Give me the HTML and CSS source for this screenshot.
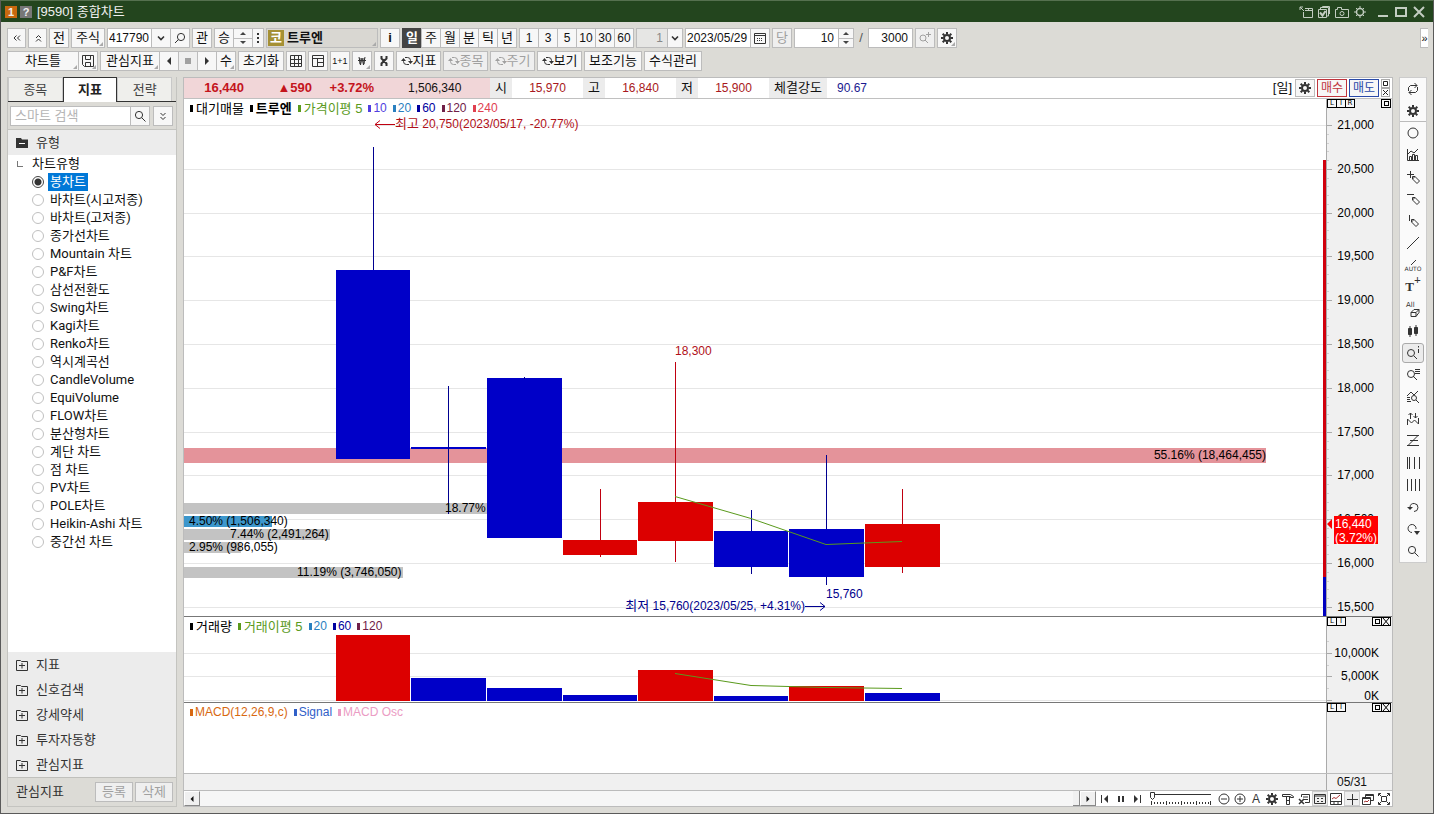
FILE: index.html
```html
<!DOCTYPE html>
<html lang="ko">
<head>
<meta charset="utf-8">
<title>[9590] 종합차트</title>
<link rel="stylesheet" href="styles.css">
</head>
<body>
<svg class="defs" aria-hidden="true">
  <symbol id="gear" viewBox="0 0 12 12"><g fill="none" stroke="currentColor"><circle cx="6" cy="6" r="3" stroke-width="2"/><path stroke-width="2" d="M6 0v2M6 10v2M0 6h2M10 6h2M1.7 1.7l1.5 1.5M8.8 8.8l1.5 1.5M10.3 1.7L8.8 3.2M3.2 8.8l-1.5 1.5"/></g></symbol>
  <symbol id="lens" viewBox="0 0 12 12"><g fill="none" stroke="currentColor"><circle cx="5" cy="5" r="3.6"/><path d="M7.7 7.7L11.5 11.5"/></g></symbol>
  <symbol id="lensl" viewBox="0 0 12 12"><g fill="none" stroke="currentColor"><circle cx="7" cy="5" r="3.6"/><path d="M4.4 7.6L1 11"/></g></symbol>
  <symbol id="down" viewBox="0 0 12 12"><path fill="none" stroke="currentColor" stroke-width="1.6" d="M3 4.500l3 3 3-3"/></symbol>
  <symbol id="sync" viewBox="0 0 12 12"><path fill="none" stroke="currentColor" d="M4 2.500h2.500a3 3 0 0 1 3 3v1M8 9.500H5.500a3 3 0 0 1-3-3v-1"/><path fill="currentColor" stroke="none" d="M7 6h5L9.500 9zM0 6h5L2.500 3z"/></symbol>
  <symbol id="plusbox" viewBox="0 0 12 12"><path fill="none" stroke="currentColor" d="M.5 1.500h4l1 1h6v9H.5zM3 6.500h6M6 4v5.500"/></symbol>
  <symbol id="pen" viewBox="0 0 8 8"><path fill="none" stroke="currentColor" d="M.5.5h2.500l4.500 4.500-2.500 2.500L.5 3zM3 .5L.5 3"/></symbol>
</svg>

<header class="titlebar">
  <span class="badge">1</span><span class="badge help">?</span>
  <h1>[9590] 종합차트</h1>
  <div class="winbtns">
    <button aria-label="분리"><svg viewBox="0 0 14 12"><path d="M4.500 6V11.500H13.500V2.500H6M6 4.500h7M5 5L1 1M1 4V1h3M9.500 2v3"/></svg></button>
    <button aria-label="저장"><svg viewBox="0 0 14 12"><path d="M1.500 3.500h8v8h-8zM3.500 3V1.500h8V10H10M5.500 1V.5h7V8"/><path stroke-width="2" d="M3 6.500l2.500 3L8.500 5"/></svg></button>
    <button aria-label="캡처"><svg viewBox="0 0 14 12"><path d="M.5 3.500h2V1.500h4v2h7v8h-13z"/><circle cx="7" cy="7.500" r="2"/></svg></button>
    <button aria-label="설정"><svg viewBox="0 0 14 12"><circle cx="7" cy="6" r="3.500" stroke-width="1.500"/><path d="M7 0v2M7 10v2M1 6h2M11 6h2M3 2l1 1M10 9l1 1M11 2l-1 1M4 9l-1 1"/></svg></button>
    <button class="first-win" aria-label="최소화"><svg viewBox="0 0 14 12"><path stroke-width="2" d="M2 10h10"/></svg></button>
    <button aria-label="최대화"><svg viewBox="0 0 14 12"><path stroke-width="2" d="M2 2h10v8H2z"/></svg></button>
    <button aria-label="닫기"><svg viewBox="0 0 14 12"><path stroke-width="2" d="M2 1l10 10M12 1L2 11"/></svg></button>
  </div>
</header>

<div class="toolbars">
<div class="bar">
  <button class="btn narrow" aria-label="왼쪽으로"><svg class="ic" viewBox="0 0 12 12"><path d="M5.500 3.500L3 6l2.500 2.500M9 3.500L6.500 6 9 8.500"/></svg></button>
  <button class="btn narrow" aria-label="위로"><svg class="ic" viewBox="0 0 12 12"><path d="M4 6l2.500-2.500L9 6M4 9.500L6.500 7 9 9.500"/></svg></button>
  <button class="btn">전</button>
  <button class="btn w34 corner">주식</button>
  <div class="group">
    <input class="field w45" aria-label="종목코드" value="417790">
    <button class="btn" aria-label="목록"><svg class="ic"><use href="#down"/></svg></button>
    <button class="btn" aria-label="검색"><svg class="ic"><use href="#lensl"/></svg></button>
  </div>
  <button class="btn">관</button>
  <div class="group">
    <button class="btn">승</button>
    <div class="spin w20"><button aria-label="증가"></button><button aria-label="감소"></button></div>
    <button class="btn w12" aria-label="더보기"><svg class="ic" viewBox="0 0 12 12"><path stroke-width="2" d="M6 1v2M6 5v2M6 9v2"/></svg></button>
  </div>
  <div class="stock corner"><span class="kosdaq">코</span><b>트루엔</b></div>
  <button class="btn"><b>i</b></button>
  <div class="group">
    <button class="btn on">일</button><button class="btn">주</button><button class="btn">월</button><button class="btn">분</button><button class="btn">틱</button><button class="btn">년</button>
  </div>
  <div class="group num">
    <button class="btn">1</button><button class="btn">3</button><button class="btn">5</button><button class="btn">10</button><button class="btn">30</button><button class="btn">60</button>
  </div>
  <div class="group w47">
    <input class="field off grow" aria-label="주기" value="1">
    <button class="btn w16" aria-label="주기 목록"><svg class="ic"><use href="#down"/></svg></button>
  </div>
  <div class="group">
    <input class="field w66" aria-label="날짜" value="2023/05/29">
    <button class="btn" aria-label="달력"><svg class="ic" viewBox="0 0 12 12"><path d="M.5 1.500h11v10H.5zM1 3.500h10"/><path stroke-dasharray="1 1" d="M3 6.500h6M3 8.500h6"/></svg></button>
  </div>
  <button class="btn dis">당</button>
  <div class="group">
    <input class="field right w45" aria-label="봉 개수" value="10">
    <div class="spin w16"><button aria-label="늘리기"></button><button aria-label="줄이기"></button></div>
  </div>
  <span class="slash">/</span>
  <input class="field right w45" aria-label="전체 개수" value="3000">
  <button class="btn dis" aria-label="확대"><svg class="ic" viewBox="0 0 12 12"><circle cx="4" cy="6" r="3"/><path d="M6 8l3 3M9.500 0v5M7 2.500h5"/></svg></button>
  <button class="btn corner" aria-label="설정"><svg class="ic"><use href="#gear"/></svg></button>
  <button class="more" aria-label="펼치기">»</button>
</div>
<div class="bar">
  <div class="group">
    <button class="btn w72 corner">차트틀</button>
    <button class="btn corner" aria-label="저장"><svg class="ic" viewBox="0 0 12 12"><path d="M.5.5h11v11H2.500l-2-2zM3.500.5v4h5v-4M3.500 11.500v-4h5v4"/></svg></button>
  </div>
  <div class="group">
    <button class="btn w60 corner">관심지표</button>
    <button class="btn" aria-label="이전"><svg class="ic solid" viewBox="0 0 12 12"><path d="M8 2v8L4 6z"/></svg></button>
    <button class="btn dis" aria-label="정지"><svg class="ic solid" viewBox="0 0 12 12"><path d="M3 3h6v6H3z"/></svg></button>
    <button class="btn" aria-label="다음"><svg class="ic solid" viewBox="0 0 12 12"><path d="M4 2v8l4-4z"/></svg></button>
    <button class="btn corner">수</button>
  </div>
  <button class="btn w46">초기화</button>
  <button class="btn" aria-label="표"><svg class="ic" viewBox="0 0 12 12"><path d="M.5.5h11v11H.5zM4.500 0v12M8.500 0v12M0 4.500h12M0 8.500h12"/></svg></button>
  <button class="btn" aria-label="레이아웃"><svg class="ic" viewBox="0 0 12 12"><path d="M.5.5h11v11H.5zM.5 3.500h11M5.500 3.500v8M5.500 7.500h6"/></svg></button>
  <button class="btn tiny">1+1</button>
  <button class="btn corner" aria-label="원화"><svg class="ic" viewBox="0 0 12 12"><path d="M3 2l1.500 8L6 3l1.500 7L9 2M4 9V3M8 9V3M2 5.500h8"/></svg></button>
  <button class="btn" aria-label="도구"><svg class="ic" viewBox="0 0 12 12"><path stroke-width="2" d="M3.500 1v2.500l5 5V11M8.500 1v2.500l-5 5V11"/></svg></button>
  <button class="btn w45"><svg class="ic"><use href="#sync"/></svg>지표</button>
  <button class="btn w45 dis"><svg class="ic"><use href="#sync"/></svg>종목</button>
  <button class="btn w45 dis"><svg class="ic"><use href="#sync"/></svg>주기</button>
  <button class="btn w45"><svg class="ic"><use href="#sync"/></svg>보기</button>
  <button class="btn w58">보조기능</button>
  <button class="btn w58">수식관리</button>
</div>
</div>

<div class="main">
<aside class="side">
  <nav class="tabs"><button>종목</button><button class="active">지표</button><button>전략</button></nav>
  <div class="find">
    <div class="group grow"><input class="field grow" aria-label="스마트 검색" placeholder="스마트 검색"><button class="btn" aria-label="검색"><svg class="ic"><use href="#lens"/></svg></button></div>
    <button class="btn" aria-label="펼치기"><svg class="ic" viewBox="0 0 12 12"><path d="M3.500 3L6 5.500 8.500 3M3.500 7L6 9.500 8.500 7"/></svg></button>
  </div>
  <button class="sec"><svg class="ic solid" viewBox="0 0 12 12"><path d="M0 1h5l1 1.500h6V11H0z"/><path stroke="#fff" d="M3 6.500h6"/></svg>유형</button>
  <div class="tree">
    <p class="root">차트유형</p>
    <label><input type="radio" name="t" checked><span>봉차트</span></label>
    <label><input type="radio" name="t"><span>바차트(시고저종)</span></label>
    <label><input type="radio" name="t"><span>바차트(고저종)</span></label>
    <label><input type="radio" name="t"><span>종가선차트</span></label>
    <label><input type="radio" name="t"><span>Mountain 차트</span></label>
    <label><input type="radio" name="t"><span>P&amp;F차트</span></label>
    <label><input type="radio" name="t"><span>삼선전환도</span></label>
    <label><input type="radio" name="t"><span>Swing차트</span></label>
    <label><input type="radio" name="t"><span>Kagi차트</span></label>
    <label><input type="radio" name="t"><span>Renko차트</span></label>
    <label><input type="radio" name="t"><span>역시계곡선</span></label>
    <label><input type="radio" name="t"><span>CandleVolume</span></label>
    <label><input type="radio" name="t"><span>EquiVolume</span></label>
    <label><input type="radio" name="t"><span>FLOW차트</span></label>
    <label><input type="radio" name="t"><span>분산형차트</span></label>
    <label><input type="radio" name="t"><span>계단 차트</span></label>
    <label><input type="radio" name="t"><span>점 차트</span></label>
    <label><input type="radio" name="t"><span>PV차트</span></label>
    <label><input type="radio" name="t"><span>POLE차트</span></label>
    <label><input type="radio" name="t"><span>Heikin-Ashi 차트</span></label>
    <label><input type="radio" name="t"><span>중간선 차트</span></label>
  </div>
  <button class="sec"><svg class="ic"><use href="#plusbox"/></svg>지표</button>
  <button class="sec"><svg class="ic"><use href="#plusbox"/></svg>신호검색</button>
  <button class="sec"><svg class="ic"><use href="#plusbox"/></svg>강세약세</button>
  <button class="sec"><svg class="ic"><use href="#plusbox"/></svg>투자자동향</button>
  <button class="sec"><svg class="ic"><use href="#plusbox"/></svg>관심지표</button>
  <div class="sidefoot"><span>관심지표</span><button class="btn dis w38">등록</button><button class="btn dis w38">삭제</button></div>
</aside>

<section class="chart">
  <div class="quote">
    <div class="hot"><b>16,440</b><b>▲590</b><b>+3.72%</b><span>1,506,340</span></div>
    <span class="lab">시</span><span class="val">15,970</span>
    <span class="lab">고</span><span class="val">16,840</span>
    <span class="lab">저</span><span class="val">15,900</span>
    <span class="lab wide">체결강도</span><span class="power">90.67</span>
    <span class="period">[일]</span>
    <button class="btn" aria-label="설정"><svg class="ic"><use href="#gear"/></svg></button>
    <button class="btn buy">매수</button>
    <button class="btn sell">매도</button>
    <div class="stack"><button aria-label="최대화"><svg viewBox="0 0 7 7"><path d="M1.500 1.500h4v4h-4z"/></svg></button><button aria-label="닫기"><svg viewBox="0 0 7 7"><path d="M1 1l5 5M6 1L1 6"/></svg></button></div>
  </div>

  <div class="pane">
    <div class="plot">
      <svg class="draw" height="517">
        <g class="grid"><path d="M0 26.500h4000M0 70.500h4000M0 114.500h4000M0 157.500h4000M0 201.500h4000M0 245.500h4000M0 289.500h4000M0 333.500h4000M0 376.500h4000M0 420.500h4000M0 464.500h4000M0 508.500h4000"/></g>
        <rect class="pink" x="0" y="349" width="1082" height="15"/>
        <g class="gray"><rect y="404" width="303" height="11"/><rect y="430" width="146" height="11"/><rect y="443" width="57" height="11"/><rect y="468" width="219" height="11"/></g>
        <rect class="sky" y="417" width="88" height="11"/>
        <g class="down"><rect x="152" y="171" width="74" height="189"/><rect x="227" y="348" width="75" height="2"/><rect x="303" y="279" width="75" height="160"/><rect x="530" y="432" width="74" height="36"/><rect x="605" y="430" width="75" height="48"/></g>
        <g class="up"><rect x="379" y="441" width="74" height="15"/><rect x="454" y="403" width="75" height="39"/><rect x="681" y="425" width="75" height="43"/></g>
        <path class="dw" d="M189.500 48v123M264.500 287v128M340.500 278v2M567.500 411v21M567.500 468v7M642.500 356v74M642.500 478v8"/>
        <path class="uw" d="M416.500 390v51M416.500 456v2M491.500 263v140M491.500 442v21M718.500 390v35M718.500 468v6"/>
        <path class="ma" d="M491 397.500L567 419.500 642 445.500 718 442.500"/>
        <g class="t"><text x="1082" y="360" text-anchor="end">55.16% (18,464,455)</text><text x="261" y="413">18.77%</text><text x="5" y="426">4.50% (1,506,340)</text><text x="46" y="439">7.44% (2,491,264)</text><text x="5" y="452">2.95% (986,055)</text><text x="113" y="477">11.19% (3,746,050)</text></g>
        <path class="uw" d="M191 25.500h20M196 21.500l-5 4 5 4"/>
        <text class="t red" x="211" y="29"><tspan class="ko">최고</tspan> 20,750(2023/05/17, -20.77%)</text>
        <text class="t red" x="491" y="256">18,300</text>
        <text class="t navy" x="642" y="499">15,760</text>
        <text class="t navy" x="621" y="511" text-anchor="end"><tspan class="ko">최저</tspan> 15,760(2023/05/25, +4.31%)</text>
        <path class="dw" d="M621 507.500h20M636 503.500l5 4-5 4"/>
      </svg>
      <div class="legend"><span class="k">대기매물</span><b class="k">트루엔</b><span class="green">가격이평 5</span><span class="c10">10</span><span class="c20">20</span><span class="c60">60</span><span class="c120">120</span><span class="c240">240</span></div>
      <div class="range"><i></i></div>
    </div>
    <div class="axis">
      <svg class="draw" height="517">
        <defs><pattern id="ticks" width="6" height="219" y="26" patternUnits="userSpaceOnUse"><path stroke="#aaa" d="M0 .5h5M0 44.500h5M0 88.500h5M0 131.500h5M0 175.500h5"/><path stroke="#d0d0d0" d="M0 9.500h2M0 18.500h2M0 26.500h2M0 35.500h2M0 53.500h2M0 61.500h2M0 70.500h2M0 79.500h2M0 97.500h2M0 105.500h2M0 114.500h2M0 123.500h2M0 140.500h2M0 149.500h2M0 158.500h2M0 166.500h2M0 184.500h2M0 193.500h2M0 201.500h2M0 210.500h2"/></pattern></defs>
        <rect y="26" width="6" height="491" fill="url(#ticks)"/>
        <g class="t" text-anchor="end"><text x="47" y="30">21,000</text><text x="47" y="74">20,500</text><text x="47" y="118">20,000</text><text x="47" y="161">19,500</text><text x="47" y="205">19,000</text><text x="47" y="249">18,500</text><text x="47" y="293">18,000</text><text x="47" y="337">17,500</text><text x="47" y="380">17,000</text><text x="47" y="424">16,500</text><text x="47" y="468">16,000</text><text x="47" y="512">15,500</text></g>
        <path fill="#f00" d="M0 425l5-5v10zM7 417h44v28H7z"/>
        <g class="t white"><text x="8" y="429">16,440</text><text x="8" y="443">(3.72%)</text></g>
      </svg>
      <div class="mini"><button>L</button><button>I</button><button>R</button><span></span><button aria-label="최대화"><i></i></button></div>
    </div>
  </div>

  <div class="pane">
    <div class="plot">
      <svg class="draw" height="85">
        <path class="grid" d="M0 36.500h4000M0 59.500h4000M0 83.500h4000"/>
        <g class="up"><rect x="152" y="18" width="74" height="66"/><rect x="454" y="53" width="75" height="31"/><rect x="605" y="69" width="75" height="15"/></g>
        <g class="down"><rect x="227" y="61" width="75" height="23"/><rect x="303" y="71" width="75" height="13"/><rect x="379" y="78" width="74" height="6"/><rect x="530" y="79" width="74" height="5"/><rect x="681" y="76" width="75" height="8"/></g>
        <path class="ma" d="M491 56.500L567 68.500 642 70.500 718 71.500"/>
      </svg>
      <div class="legend"><span class="k">거래량</span><span class="green">거래이평 5</span><span class="c20">20</span><span class="c60">60</span><span class="c120">120</span></div>
    </div>
    <div class="axis">
      <svg class="draw" height="85"><path stroke="#aaa" d="M0 36.500h5M0 59.500h5M0 83.500h5"/><path stroke="#d0d0d0" d="M0 24.500h2M0 48.500h2M0 71.500h2"/><g class="t" text-anchor="end"><text x="52" y="40">10,000K</text><text x="52" y="63">5,000K</text><text x="52" y="83">0K</text></g></svg>
      <div class="mini"><button>L</button><button>I</button><span></span><button aria-label="최대화"><i></i></button><button aria-label="닫기"><svg viewBox="0 0 8 7"><path d="M1 0l6 7M7 0L1 7"/></svg></button></div>
    </div>
  </div>

  <div class="pane fill">
    <div class="plot"><div class="legend"><span class="macd">MACD(12,26,9,c)</span><span class="sig">Signal</span><span class="osc">MACD Osc</span></div></div>
    <div class="axis"><div class="mini"><button>L</button><button>I</button><span></span><button aria-label="최대화"><i></i></button><button aria-label="닫기"><svg viewBox="0 0 8 7"><path d="M1 0l6 7M7 0L1 7"/></svg></button></div></div>
  </div>
  <div class="dates"><span></span><time>05/31</time></div>

  <div class="scroll">
    <button class="arrow" aria-label="왼쪽"><svg class="ic solid" viewBox="0 0 12 12"><path d="M7.500 3v6l-3-3z"/></svg></button>
    <div class="track"><i></i></div>
    <button class="arrow" aria-label="오른쪽"><svg class="ic solid" viewBox="0 0 12 12"><path d="M4.500 3v6l3-3z"/></svg></button>
    <button class="tool" aria-label="처음"><svg class="ic solid" viewBox="0 0 12 12"><path d="M2 2h1v8H2zM9 2v8L5 6z"/></svg></button>
    <button class="tool" aria-label="일시정지"><svg class="ic solid" viewBox="0 0 12 12"><path d="M3 3h2v6H3zM7 3h2v6H7z"/></svg></button>
    <button class="tool" aria-label="끝"><svg class="ic solid" viewBox="0 0 12 12"><path d="M9 2h1v8H9zM3 2v8l4-4z"/></svg></button>
    <svg class="slider" viewBox="0 0 64 14" role="img" aria-label="배율"><path d="M2 2.500h60"/><path stroke-dasharray="1 2" stroke-width="2" d="M2 11h60"/><path d="M2.500 9v4M17.500 9v4M32.500 9v4M47.500 9v4M61.500 9v4"/><path fill="#fff" d="M1.500.5h4v5l-2 2-2-2z"/></svg>
    <button class="tool" aria-label="축소"><svg class="ic" viewBox="0 0 12 12"><circle cx="6" cy="6" r="5"/><path d="M3 6h6"/></svg></button>
    <button class="tool" aria-label="확대"><svg class="ic" viewBox="0 0 12 12"><circle cx="6" cy="6" r="5"/><path d="M3 6h6M6 3v6"/></svg></button>
    <button class="tool">A</button>
    <button class="tool" aria-label="설정"><svg class="ic"><use href="#gear"/></svg></button>
    <button class="tool" aria-label="도구"><svg class="ic" viewBox="0 0 12 12"><path d="M.5 3.500v-2h8l3 2v1h-3v-1h-8M4.500 4v7.500h3V4M4.500 7.500h3"/></svg></button>
    <button class="tool" aria-label="삭제"><svg class="ic" viewBox="0 0 12 12"><path d="M3.500 4V1.500h8v8H7M5 4h5M6 6.500h4"/><path stroke-width="1.500" d="M1 6l5 5M6 6l-5 5"/></svg></button>
    <button class="tool press" aria-label="목록"><svg class="ic" viewBox="0 0 12 12"><path d="M.5 1.500h11v9H.5zM.5 3h11M3 5.500h2M7 5.500h2M3 8.500h2M7 8.500h2"/></svg></button>
    <button class="tool" aria-label="차트"><svg class="ic" viewBox="0 0 12 12"><path d="M.5.500h11v11H.5zM1 8.500h10M4 9v2M8 9v2"/><path stroke="#a33" d="M2 6l2-1.500 2 1 4-3.500"/></svg></button>
    <button class="tool press" aria-label="십자선"><svg class="ic" viewBox="0 0 12 12"><path d="M1 6.500h11M6.500 1v11"/></svg></button>
    <button class="tool" aria-label="창"><svg class="ic" viewBox="0 0 12 12"><path d="M3.500 4V1.500h8v6H9M4 2.500h7M.5 4.500h8v7h-8zM.5 5.500h8"/><path stroke="#a33" d="M2 9l2-1 1 1 2-2"/></svg></button>
    <button class="tool" aria-label="전체화면"><svg class="ic" viewBox="0 0 12 12"><path d="M3.500 3.500h5v5h-5zM.5 3V.5H3M9 .5h2.500V3M11.500 9v2.500H9M3 11.500H.5V9M1 1l2 2M11 1L9 3M1 11l2-2M11 11L9 9"/></svg></button>
  </div>
</section>

<nav class="tools">
  <button aria-label="새로고침"><svg viewBox="0 0 14 14"><path d="M2.500 9V5.500l2-2H11M8.500 1L11 3.500 8.500 6M11.500 5v3.500l-2 2H3M5.500 8L3 10.500 5.500 13"/></svg></button>
  <button class="rule" aria-label="설정"><svg class="ic"><use href="#gear"/></svg></button>
  <button aria-label="원"><svg viewBox="0 0 14 14"><circle cx="7" cy="7" r="5"/></svg></button>
  <button aria-label="차트"><svg viewBox="0 0 14 14"><path d="M1.500 1v11.500H13M3.500 12V8.500h2V12M6.500 12V6.500h2V12M9.500 12V7.500h2V12M2 6l3-3 3 2 4-4"/></svg></button>
  <button aria-label="십자선 그리기"><svg viewBox="0 0 14 14"><path d="M1 4.500h7M4.500 1v7"/><use href="#pen" x="6" y="6" width="8" height="8"/></svg></button>
  <button aria-label="수평선"><svg viewBox="0 0 14 14"><path d="M1 2.500h7"/><use href="#pen" x="6" y="5" width="8" height="8"/></svg></button>
  <button aria-label="수직선"><svg viewBox="0 0 14 14"><path d="M3.500 1v6"/><use href="#pen" x="5" y="5" width="8" height="8"/></svg></button>
  <button aria-label="추세선"><svg viewBox="0 0 14 14"><path d="M1 13L13 1"/></svg></button>
  <button class="auto"><svg viewBox="0 0 14 6"><path d="M5 6l5-5"/></svg>AUTO</button>
  <button class="type">T<sup>+</sup></button>
  <button class="all">All<svg viewBox="0 0 14 8"><path d="M5 3.500l3-3h5v3l-3 4H5zM5 3.500h5v4M10 3.500l3-3"/></svg></button>
  <button aria-label="봉"><svg viewBox="0 0 14 14"><path d="M4 2v11M10 1v11"/><path fill="#333" d="M2.500 4.500h3v6h-3zM8.500 3.500h3v6h-3z"/></svg></button>
  <button class="sel" aria-label="정보"><svg viewBox="0 0 14 14"><circle cx="5" cy="7" r="3.500"/><path d="M8 10l3 3M12.500 3v4M12.500 0v1.500"/></svg></button>
  <button aria-label="목록 검색"><svg viewBox="0 0 14 14"><circle cx="5" cy="6" r="3.500"/><path d="M7 8l4 4M9 1.500h5M9 3.500h5M9 5.500h5"/></svg></button>
  <button aria-label="패턴 검색"><svg viewBox="0 0 14 14"><path d="M1 6l4-4 3 3 4-4M1 7.500h3M1 9.500h3M1 11.500h4"/><circle cx="8" cy="8" r="2.500"/><path d="M10 10l3 3"/></svg></button>
  <button aria-label="반전"><svg viewBox="0 0 14 14"><path d="M1.500 13V7l4 4 3-3 4 4V6M4.500 1v6M2.500 3l2-2 2 2M9.500 1v5M7.500 4l2 2 2-2"/></svg></button>
  <button aria-label="피보나치"><svg viewBox="0 0 14 14"><path d="M1 1.500h12M4 6.500h8M1 11.500h12M12 1.500L2 11.500"/></svg></button>
  <button aria-label="시간선"><svg viewBox="0 0 14 14"><path d="M1.500 1v12M3.500 1v12M8.500 1v12M13.500 1v12"/></svg></button>
  <button aria-label="등간격선"><svg viewBox="0 0 14 14"><path d="M1.500 1v12M5.500 1v12M9.500 1v12M13.500 1v12"/></svg></button>
  <button aria-label="되돌리기"><svg viewBox="0 0 14 14"><path d="M4 7a4 4 0 1 1 4 4.500"/><path fill="#333" stroke="none" d="M1 7h6l-3 3z"/></svg></button>
  <button aria-label="다시 실행"><svg viewBox="0 0 14 14"><path d="M6 10.500A4 4 0 1 1 10 7"/><path fill="#333" stroke="none" d="M8 9h6l-3 4z"/></svg></button>
  <button aria-label="검색"><svg class="ic"><use href="#lens"/></svg></button>
</nav>
</div>
</body>
</html>
```
FILE: styles.css
```css
* { box-sizing: border-box; }
body {
  margin: 0; height: 100vh; display: flex; flex-direction: column; overflow: hidden;
  background: #dcdbd6; color: #111;
  border: 1px solid #5a5a5a; border-top-color: #55704f;
  font: 13px/16px "Liberation Sans", "Noto Sans CJK KR", sans-serif;
}
button, input { font: inherit; color: inherit; margin: 0; padding: 0; border-radius: 0; }
button { background: none; border: 0; }
.defs { position: absolute; width: 0; height: 0; }
.ic { width: 12px; height: 12px; fill: none; stroke: currentColor; flex: none; display: block; }
.ic.solid { fill: currentColor; stroke: none; }
.grow { flex: 1; min-width: 0; }

.titlebar { flex: none; height: 21px; background: #23451e; color: #f0f0f0; display: flex; align-items: center; padding: 0 7px 0 4px; gap: 3px; }
.titlebar h1 { margin: 0 0 0 2px; font-size: 13px; font-weight: 400; flex: 1; }
.badge { width: 12px; height: 12px; background: #c8690f; font: bold 11px/12px "Liberation Sans", sans-serif; text-align: center; }
.badge.help { background: #777; }
.winbtns { display: flex; gap: 4px; }
.winbtns svg { width: 14px; height: 12px; display: block; fill: none; stroke: #c3cdc1; }
.winbtns .first-win { margin-left: 5px; }

.toolbars { flex: none; display: grid; gap: 3px; padding: 6px 5px 6px 6px; }
.bar { display: flex; gap: 2px; height: 20px; align-items: stretch; }
.group { display: flex; }
.group > * + * { margin-left: -1px; }
.btn { width: 20px; height: 20px; flex: none; display: flex; align-items: center; justify-content: center; background: #f7f7f7; border: 1px solid #bcbcbc; line-height: 16px; white-space: nowrap; position: relative; }
.btn .ic { color: #333; }
.btn.dis, .btn.dis .ic { color: #a0a0a0; }
.btn.dis { background: #efefef; }
.btn.on { background: #444; color: #fff; font-weight: 700; border-color: #444; }
.narrow { width: 19px; }
.w12 { width: 12px; } .w16 { width: 16px; } .w20 { width: 20px; } .w34 { width: 34px; } .w38 { width: 38px; }
.w45 { width: 45px; } .w46 { width: 46px; } .w47 { width: 47px; } .w58 { width: 58px; } .w60 { width: 60px; } .w66 { width: 66px; } .w72 { width: 72px; }
.num { font-size: 12px; }
.tiny { font-size: 9px; }
.corner { position: relative; }
.corner::after { content: ""; position: absolute; right: 1px; bottom: 1px; border: 2px solid; border-color: transparent #aaa #aaa transparent; }
.field { height: 20px; background: #fff; border: 1px solid #bcbcbc; padding: 0 1px; font-size: 12px; }
.field.right, .field.off { text-align: right; padding-right: 4px; }
.field.off { background: #e6e6e4; color: #888; }
.field::placeholder { color: #b5b5b5; font-size: 13px; opacity: 1; }
.find .field { padding-left: 4px; }
.spin { display: grid; border: 1px solid #bcbcbc; background: #f7f7f7; }
.spin button { display: grid; place-items: center; }
.spin button + button { border-top: 1px solid #bcbcbc; }
.spin button::after { content: ""; border: 3px solid transparent; border-top-width: 0; border-bottom-color: #444; }
.spin button + button::after { border-width: 3px 3px 0; border-top-color: #444; }
.stock { width: 112px; display: flex; align-items: center; gap: 3px; border: 1px solid #bcbcbc; background: #d9d7d2; padding: 0 1px; }
.kosdaq { width: 16px; line-height: 16px; background: #a59034; color: #fff; font-weight: 700; text-align: center; }
.slash { width: 10px; line-height: 20px; text-align: center; color: #555; }
.more { margin-left: auto; width: 8px; background: #fff; border: 1px solid #bcbcbc; border-right: 0; font-size: 11px; }

.main { flex: 1; min-height: 0; display: flex; gap: 6px; padding: 0 6px 6px 6px; }
.side { width: 170px; flex: none; display: flex; flex-direction: column; border: 1px solid #c4c4c0; border-top: 0; background: #dcdbd6; }
.tabs { display: flex; height: 25px; border-bottom: 1px solid #333; padding-right: 4px; }
.tabs button { flex: 1; background: #efefec; border: 1px solid #c8c8c8; border-bottom: 0; color: #444; }
.tabs .active { background: #fff; border-color: #333; font-weight: 700; color: #222; margin-bottom: -1px; }
.find { display: flex; gap: 3px; padding: 4px 3px 3px 2px; border-bottom: 1px solid #c4c4c0; }
.sec { flex: none; height: 25px; background: #ececec; color: #333; display: flex; align-items: center; gap: 8px; padding-left: 8px; text-align: left; }
.tree { flex: 1; min-height: 0; background: #fff; overflow: hidden; font-family: Roboto, "Noto Sans CJK KR", sans-serif; line-height: 18px; }
.tree p { margin: 0; padding-left: 24px; position: relative; }
.root::before { content: ""; position: absolute; left: 9px; top: 6px; width: 5px; height: 5px; border: solid #777; border-width: 0 0 1px 1px; }
.tree label { display: flex; align-items: center; height: 18px; padding-left: 24px; gap: 4px; }
.tree span { padding: 0 2px; }
.tree input { appearance: none; width: 12px; height: 12px; border: 1px solid #c0c0c0; border-radius: 50%; background: #fff; }
.tree input:checked { border-color: #444; background: radial-gradient(#333 0 3px, #fff 4px); }
.tree input:checked + span { background: #0078d7; color: #fff; }
.sidefoot { display: flex; align-items: center; gap: 2px; padding: 4px 3px 4px 8px; border-top: 1px solid #c0c0bc; color: #333; }
.sidefoot span { flex: 1; }

.chart { flex: 1; min-width: 0; display: flex; flex-direction: column; background: #fff; border: 1px solid #bcbcbc; }
.quote { flex: none; height: 21px; display: flex; align-items: center; border-bottom: 1px solid #c0c0c0; font-size: 12px; padding-right: 2px; }
.hot { align-self: stretch; width: 306px; display: flex; align-items: center; background: #f1d6d8; }
.hot b { font-size: 13px; color: #c4141c; text-align: right; width: 62px; }
.hot b:nth-child(2) { width: 54px; margin-left: 14px; }
.hot b:first-child { width: 60px; }
.hot span { flex: 1; padding-left: 34px; }
.lab { width: 22px; align-self: stretch; background: #ececec; text-align: center; font-size: 13px; line-height: 20px; }
.lab.wide { width: 58px; }
.val { width: 71px; text-align: center; color: #a81820; }
.power { padding-left: 10px; color: #1a1a90; flex: 1; }
.period { font-size: 13px; padding-right: 3px; }
.quote .btn { height: 18px; margin-right: 2px; }
.quote .buy, .quote .sell { width: 30px; }
.quote .buy { border-color: #c0343c; color: #c0343c; }
.quote .sell { border-color: #2a4aa8; color: #2a4aa8; }
.stack { display: grid; width: 9px; }
.stack button { height: 9px; border: 1px solid #aaa; }
.stack svg { display: block; width: 7px; height: 7px; fill: none; stroke: #222; }

.pane { flex: none; display: flex; border-bottom: 1px solid #777; }
.pane.fill { flex: 1; min-height: 0; border-color: #bbb; }
.plot { flex: 1; min-width: 0; position: relative; }
.axis { width: 66px; flex: none; position: relative; background: #f0f0f0; border-left: 1px solid #aaa; }
.draw { display: block; width: 100%; overflow: hidden; }
.legend { position: absolute; left: 6px; top: 1px; display: flex; gap: 6px; line-height: 17px; font-size: 12px; white-space: nowrap; }
.legend > * { display: flex; align-items: center; gap: 2px; }
.legend > *::before { content: ""; width: 3px; height: 7px; background: currentColor; }
.legend .k, .legend .green { font-size: 13px; gap: 3px; }
.k { color: #000; } .green { color: #5a9a1c; } .c10 { color: #5040e0; } .c20 { color: #2a80c0; } .c60 { color: #0000a0; } .c120 { color: #702048; } .c240 { color: #e04050; }
.macd { color: #d86810; } .sig { color: #3060c8; } .osc { color: #eb9cc4; }
.range { position: absolute; right: 0; top: 61px; bottom: 0; width: 3px; background: #d0000c; }
.range i { position: absolute; left: 0; right: 0; bottom: 0; height: 39px; background: #0000c0; }
.grid { stroke: #e6e6e6; }
.pink { fill: #e4939a; } .gray { fill: #c3c3c3; } .sky { fill: #3d97cc; }
.up { fill: #dc0000; } .down { fill: #0000c8; }
.dw { stroke: #000090; fill: none; } .uw { stroke: #c00010; fill: none; } .ma { stroke: #5a9a1c; fill: none; }
.t { font-size: 12px; fill: #000; } .ko { font-size: 13px; }
.t.red { fill: #b01018; } .t.navy { fill: #00008c; } .t.white { fill: #fff; }
.mini { position: absolute; inset: 0 1px auto 0; display: flex; }
.mini span { flex: 1; }
.mini button { width: 10px; height: 9px; border: 1px solid #000; background: #f8f8f8; display: flex; align-items: center; justify-content: center; font: 7px/7px "DejaVu Sans", sans-serif; color: #000; }
.mini button + button { margin-left: -1px; }
.mini i { width: 5px; height: 5px; border: 1px solid #000; }
.mini svg { width: 8px; height: 7px; fill: none; stroke: #000; display: block; }

.dates { flex: none; display: flex; height: 17px; background: #f0f0f0; border-bottom: 1px solid #bbb; font-size: 12px; }
.dates span { flex: 1; }
.dates time { width: 66px; border-left: 1px solid #aaa; padding-left: 10px; line-height: 17px; }
.scroll { flex: none; height: 15px; display: flex; align-items: stretch; }
.arrow { width: 16px; background: #f0f0f0; border: 1px solid #888; border-top-color: #fff; border-left-color: #fff; display: grid; place-items: center; }
.track { flex: 1; background: #f6f6f6; display: flex; justify-content: flex-end; }
.track i { width: 7px; background: #f0f0f0; border-right: 1px solid #888; border-bottom: 1px solid #888; }
.tool { width: 16px; display: grid; place-items: center; color: #333; font-size: 12px; }
.arrow + .tool { margin-left: 1px; }
.press { background: #efefef; outline: 1px solid #ccc; outline-offset: -1px; }
.slider { width: 64px; height: 14px; margin: 1px 3px 0 4px; fill: none; stroke: #333; }

.tools { flex: none; width: 28px; align-self: flex-start; display: flex; flex-direction: column; background: #fafafa; border: 1px solid #ccc; color: #333; }
.tools button { height: 22px; display: grid; place-items: center; }
.tools svg { width: 14px; height: 14px; fill: none; stroke: #333; display: block; }
.tools .ic { width: 12px; height: 12px; }
.tools .rule { border-bottom: 1px solid #bbb; }
.tools .sel { margin: 1px 2px; height: 20px; border: 1px solid #aaa; border-radius: 3px; background: #ececec; }
.tools .auto { font: 6px/7px "DejaVu Sans", sans-serif; align-content: center; }
.tools .auto svg { height: 6px; }
.tools .type { font: bold 13px/14px "Liberation Serif", serif; display: flex; align-items: center; justify-content: center; }
.tools sup { font-size: 12px; line-height: 8px; align-self: flex-start; }
.tools .all { font: 7px/7px "DejaVu Sans", sans-serif; align-content: center; justify-items: start; padding-left: 6px; }
.tools .all svg { height: 8px; }
```
